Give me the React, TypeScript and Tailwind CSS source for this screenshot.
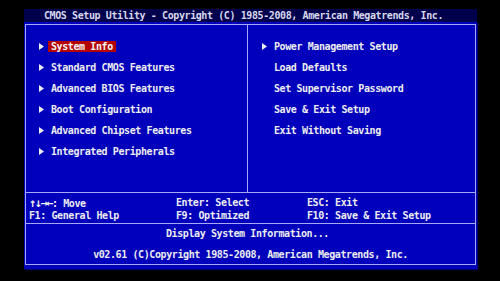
import React from 'react';

const leftItems = [
  'System Info',
  'Standard CMOS Features',
  'Advanced BIOS Features',
  'Boot Configuration',
  'Advanced Chipset Features',
  'Integrated Peripherals',
];

const rightItems: { label: string; arrow: boolean }[] = [
  { label: 'Power Management Setup', arrow: true },
  { label: 'Load Defaults', arrow: false },
  { label: 'Set Supervisor Password', arrow: false },
  { label: 'Save & Exit Setup', arrow: false },
  { label: 'Exit Without Saving', arrow: false },
];

function Arrow({ show = true }: { show?: boolean }) {
  return (
    <svg width="5" height="7" viewBox="0 0 5 7" className={show ? '' : 'invisible'}>
      <polygon points="0,0 5,3.5 0,7" fill="#ececec" />
    </svg>
  );
}

function MenuRow({ label, arrow = true, selected = false }: { label: string; arrow?: boolean; selected?: boolean }) {
  return (
    <div className="flex items-center h-[21px] gap-[4px]">
      <Arrow show={arrow} />
      <span
        className={`inline-block leading-[11px] px-[3px] whitespace-pre ${
          selected ? 'bg-[#b40000] text-[#f4f4f4]' : ''
        }`}
      >
        {label}
      </span>
    </div>
  );
}

export default function App() {
  return (
    <div className="w-[500px] h-[281px] bg-black pt-[9px] pl-[24px] font-['DejaVu_Sans_Mono',monospace] text-[10px] font-bold tracking-[-0.4px] text-[#ececec]">
      <div className="w-[453px]">
        {/* title bar */}
        <div className="h-[13px] bg-[#00004c] text-[#d8d8ec] leading-[13px] pl-[20px] whitespace-pre">
          CMOS Setup Utility - Copyright (C) 1985-2008, American Megatrends, Inc.
        </div>

        {/* main panel */}
        <div className="h-[247px] bg-[#0000bc] pl-[1px] pt-[2px] pr-[1px] pb-[4px] flex shadow-[1px_1px_1px_#000070]">
          <div className="flex-1 border border-[#a8a8f8] flex flex-col">
            {/* menus */}
            <div className="h-[168px] flex border-b border-[#a8a8f8]">
              <div className="w-[222px] border-r border-[#a8a8f8] pt-[11px] pl-[13px]">
                {leftItems.map((item, i) => (
                  <MenuRow key={item} label={item} selected={i === 0} />
                ))}
              </div>
              <div className="flex-1 pt-[11px] pl-[14px]">
                {rightItems.map((item) => (
                  <MenuRow key={item.label} label={item.label} arrow={item.arrow} />
                ))}
              </div>
            </div>

            {/* key help */}
            <div className="h-[31px] border-b border-[#a8a8f8] pt-[5px] pl-[3px] leading-[10px] grid grid-cols-[147px_131px_1fr] whitespace-pre">
              <div>
                <span className="text-[12px] tracking-[-1.5px]">↑↓→←</span>: Move
              </div>
              <div>Enter: Select</div>
              <div>ESC: Exit</div>
              <div>F1: General Help</div>
              <div>F9: Optimized</div>
              <div>F10: Save &amp; Exit Setup</div>
            </div>

            {/* description */}
            <div className="flex-1 pt-[5px] leading-[10px] text-center whitespace-pre">
              <div className="pr-[6px]">Display System Information...</div>
              <div className="mt-[11px]">v02.61 (C)Copyright 1985-2008, American Megatrends, Inc.</div>
            </div>
          </div>
        </div>
      </div>
    </div>
  );
}
